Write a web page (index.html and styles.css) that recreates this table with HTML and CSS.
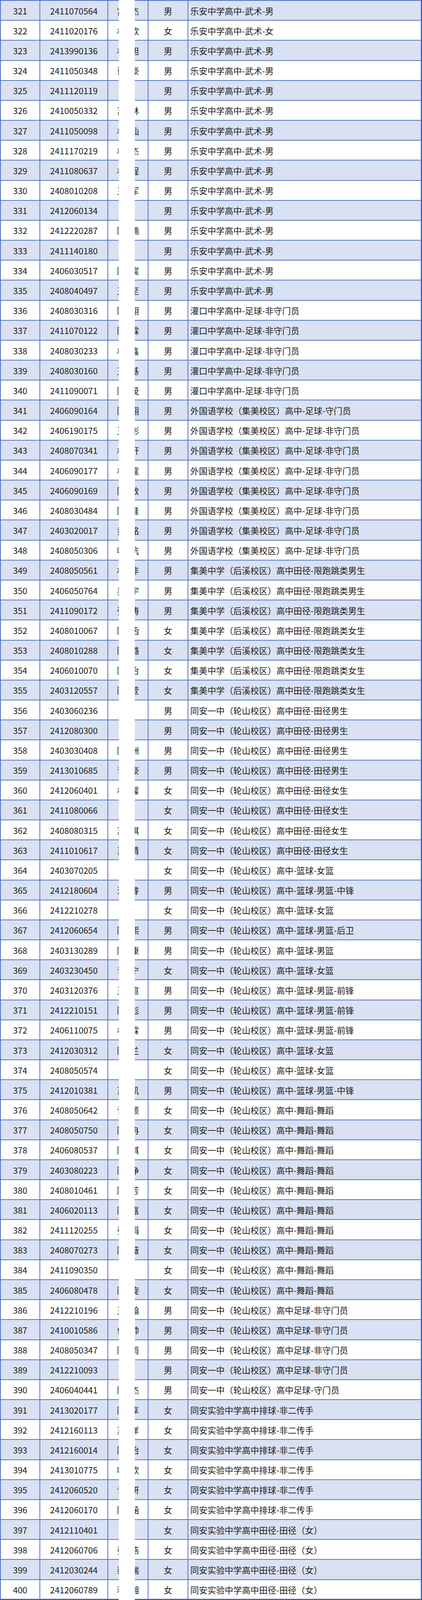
FILE: index.html
```html
<!DOCTYPE html>
<html lang="zh-CN">
<head>
<meta charset="utf-8">
<title>名单</title>
<link rel="stylesheet" href="styles.css">
</head>
<body>
<div class="sheet">
<div class="tbl">
<div class="row a"><span>321</span><span>2411070564</span><span>當X杰</span><span>男</span><span class="t">乐安中学高中-武术-男</span></div>
<div class="row"><span>322</span><span>2411020176</span><span>林X欣</span><span>女</span><span class="t">乐安中学高中-武术-女</span></div>
<div class="row a"><span>323</span><span>2413990136</span><span>林X旭</span><span>男</span><span class="t">乐安中学高中-武术-男</span></div>
<div class="row"><span>324</span><span>2411050348</span><span>谢X豪</span><span>男</span><span class="t">乐安中学高中-武术-男</span></div>
<div class="row a"><span>325</span><span>2411120119</span><span>X丨</span><span>男</span><span class="t">乐安中学高中-武术-男</span></div>
<div class="row"><span>326</span><span>2410050332</span><span>苏X林</span><span>男</span><span class="t">乐安中学高中-武术-男</span></div>
<div class="row a"><span>327</span><span>2411050098</span><span>林X仙</span><span>男</span><span class="t">乐安中学高中-武术-男</span></div>
<div class="row"><span>328</span><span>2411170219</span><span>林X杰</span><span>男</span><span class="t">乐安中学高中-武术-男</span></div>
<div class="row a"><span>329</span><span>2411080637</span><span>林X程</span><span>男</span><span class="t">乐安中学高中-武术-男</span></div>
<div class="row"><span>330</span><span>2408010208</span><span>王X军</span><span>男</span><span class="t">乐安中学高中-武术-男</span></div>
<div class="row a"><span>331</span><span>2412060134</span><span>X宇</span><span>男</span><span class="t">乐安中学高中-武术-男</span></div>
<div class="row"><span>332</span><span>2412220287</span><span>陈X楠</span><span>男</span><span class="t">乐安中学高中-武术-男</span></div>
<div class="row a"><span>333</span><span>2411140180</span><span>X丁</span><span>男</span><span class="t">乐安中学高中-武术-男</span></div>
<div class="row"><span>334</span><span>2406030517</span><span>陈X宸</span><span>男</span><span class="t">乐安中学高中-武术-男</span></div>
<div class="row a"><span>335</span><span>2408040497</span><span>王X至</span><span>男</span><span class="t">乐安中学高中-武术-男</span></div>
<div class="row"><span>336</span><span>2408030316</span><span>陈X翔</span><span>男</span><span class="t">灌口中学高中-足球-非守门员</span></div>
<div class="row a"><span>337</span><span>2411070122</span><span>陈X霖</span><span>男</span><span class="t">灌口中学高中-足球-非守门员</span></div>
<div class="row"><span>338</span><span>2408030233</span><span>林X鑫</span><span>男</span><span class="t">灌口中学高中-足球-非守门员</span></div>
<div class="row a"><span>339</span><span>2408030160</span><span>王X基</span><span>男</span><span class="t">灌口中学高中-足球-非守门员</span></div>
<div class="row"><span>340</span><span>2411090071</span><span>陈X茂</span><span>男</span><span class="t">灌口中学高中-足球-非守门员</span></div>
<div class="row a"><span>341</span><span>2406090164</span><span>陈X翔</span><span>男</span><span class="t">外国语学校（集美校区）高中-足球-守门员</span></div>
<div class="row"><span>342</span><span>2406190175</span><span>王X彬</span><span>男</span><span class="t">外国语学校（集美校区）高中-足球-非守门员</span></div>
<div class="row a"><span>343</span><span>2408070341</span><span>林X軒</span><span>男</span><span class="t">外国语学校（集美校区）高中-足球-非守门员</span></div>
<div class="row"><span>344</span><span>2406090177</span><span>林X霆</span><span>男</span><span class="t">外国语学校（集美校区）高中-足球-非守门员</span></div>
<div class="row a"><span>345</span><span>2406090169</span><span>陈X敦</span><span>男</span><span class="t">外国语学校（集美校区）高中-足球-非守门员</span></div>
<div class="row"><span>346</span><span>2408030484</span><span>陈X淮</span><span>男</span><span class="t">外国语学校（集美校区）高中-足球-非守门员</span></div>
<div class="row a"><span>347</span><span>2403020017</span><span>黄X铭</span><span>男</span><span class="t">外国语学校（集美校区）高中-足球-非守门员</span></div>
<div class="row"><span>348</span><span>2408050306</span><span>叶X杭</span><span>男</span><span class="t">外国语学校（集美校区）高中-足球-非守门员</span></div>
<div class="row a"><span>349</span><span>2408050561</span><span>林X非</span><span>男</span><span class="t">集美中学（后溪校区）高中田径-限跑跳类男生</span></div>
<div class="row"><span>350</span><span>2406050764</span><span>吴X宇</span><span>男</span><span class="t">集美中学（后溪校区）高中田径-限跑跳类男生</span></div>
<div class="row a"><span>351</span><span>2411090172</span><span>张X涛</span><span>男</span><span class="t">集美中学（后溪校区）高中田径-限跑跳类男生</span></div>
<div class="row"><span>352</span><span>2408010067</span><span>陈X函</span><span>女</span><span class="t">集美中学（后溪校区）高中田径-限跑跳类女生</span></div>
<div class="row a"><span>353</span><span>2408010288</span><span>陈X璐</span><span>女</span><span class="t">集美中学（后溪校区）高中田径-限跑跳类女生</span></div>
<div class="row"><span>354</span><span>2406010070</span><span>陈X怡</span><span>女</span><span class="t">集美中学（后溪校区）高中田径-限跑跳类女生</span></div>
<div class="row a"><span>355</span><span>2403120557</span><span>陈X萱</span><span>女</span><span class="t">集美中学（后溪校区）高中田径-限跑跳类女生</span></div>
<div class="row"><span>356</span><span>2403060236</span><span>X岚</span><span>男</span><span class="t">同安一中（轮山校区）高中田径-田径男生</span></div>
<div class="row a"><span>357</span><span>2412080300</span><span>X东</span><span>男</span><span class="t">同安一中（轮山校区）高中田径-田径男生</span></div>
<div class="row"><span>358</span><span>2403030408</span><span>陈X洲</span><span>男</span><span class="t">同安一中（轮山校区）高中田径-田径男生</span></div>
<div class="row a"><span>359</span><span>2413010685</span><span>许X豪</span><span>男</span><span class="t">同安一中（轮山校区）高中田径-田径男生</span></div>
<div class="row"><span>360</span><span>2412060401</span><span>林X馨</span><span>女</span><span class="t">同安一中（轮山校区）高中田径-田径女生</span></div>
<div class="row a"><span>361</span><span>2411080066</span><span>X文</span><span>女</span><span class="t">同安一中（轮山校区）高中田径-田径女生</span></div>
<div class="row"><span>362</span><span>2408080315</span><span>苏X琪</span><span>女</span><span class="t">同安一中（轮山校区）高中田径-田径女生</span></div>
<div class="row a"><span>363</span><span>2411010617</span><span>苏X婧</span><span>女</span><span class="t">同安一中（轮山校区）高中田径-田径女生</span></div>
<div class="row"><span>364</span><span>2403070205</span><span>X逸</span><span>女</span><span class="t">同安一中（轮山校区）高中-篮球-女篮</span></div>
<div class="row a"><span>365</span><span>2412180604</span><span>洪X睿</span><span>男</span><span class="t">同安一中（轮山校区）高中-篮球-男篮-中锋</span></div>
<div class="row"><span>366</span><span>2412210278</span><span>X宏</span><span>女</span><span class="t">同安一中（轮山校区）高中-篮球-女篮</span></div>
<div class="row a"><span>367</span><span>2412060654</span><span>陈X熙</span><span>男</span><span class="t">同安一中（轮山校区）高中-篮球-男篮-后卫</span></div>
<div class="row"><span>368</span><span>2403130289</span><span>陈X康</span><span>男</span><span class="t">同安一中（轮山校区）高中-篮球-男篮</span></div>
<div class="row a"><span>369</span><span>2403230450</span><span>许X宁</span><span>女</span><span class="t">同安一中（轮山校区）高中-篮球-女篮</span></div>
<div class="row"><span>370</span><span>2403120376</span><span>王X瑄</span><span>男</span><span class="t">同安一中（轮山校区）高中-篮球-男篮-前锋</span></div>
<div class="row a"><span>371</span><span>2412210151</span><span>陈X彪</span><span>男</span><span class="t">同安一中（轮山校区）高中-篮球-男篮-前锋</span></div>
<div class="row"><span>372</span><span>2406110075</span><span>林X霖</span><span>男</span><span class="t">同安一中（轮山校区）高中-篮球-男篮-前锋</span></div>
<div class="row a"><span>373</span><span>2412030312</span><span>陈X兰</span><span>女</span><span class="t">同安一中（轮山校区）高中-篮球-女篮</span></div>
<div class="row"><span>374</span><span>2408050574</span><span>X儿</span><span>女</span><span class="t">同安一中（轮山校区）高中-篮球-女篮</span></div>
<div class="row a"><span>375</span><span>2412010381</span><span>苏X凯</span><span>男</span><span class="t">同安一中（轮山校区）高中-篮球-男篮-中锋</span></div>
<div class="row"><span>376</span><span>2408050642</span><span>许X颖</span><span>女</span><span class="t">同安一中（轮山校区）高中-舞蹈-舞蹈</span></div>
<div class="row a"><span>377</span><span>2408050750</span><span>陈X冉</span><span>女</span><span class="t">同安一中（轮山校区）高中-舞蹈-舞蹈</span></div>
<div class="row"><span>378</span><span>2406080537</span><span>陈X淇</span><span>女</span><span class="t">同安一中（轮山校区）高中-舞蹈-舞蹈</span></div>
<div class="row a"><span>379</span><span>2403080223</span><span>陈X净</span><span>女</span><span class="t">同安一中（轮山校区）高中-舞蹈-舞蹈</span></div>
<div class="row"><span>380</span><span>2408010461</span><span>陈X芳</span><span>女</span><span class="t">同安一中（轮山校区）高中-舞蹈-舞蹈</span></div>
<div class="row a"><span>381</span><span>2406020113</span><span>陈X嘉</span><span>女</span><span class="t">同安一中（轮山校区）高中-舞蹈-舞蹈</span></div>
<div class="row"><span>382</span><span>2411120255</span><span>张X娟</span><span>女</span><span class="t">同安一中（轮山校区）高中-舞蹈-舞蹈</span></div>
<div class="row a"><span>383</span><span>2408070273</span><span>陈X薇</span><span>女</span><span class="t">同安一中（轮山校区）高中-舞蹈-舞蹈</span></div>
<div class="row"><span>384</span><span>2411090350</span><span>X心</span><span>女</span><span class="t">同安一中（轮山校区）高中-舞蹈-舞蹈</span></div>
<div class="row a"><span>385</span><span>2406080478</span><span>陈X旋</span><span>女</span><span class="t">同安一中（轮山校区）高中-舞蹈-舞蹈</span></div>
<div class="row"><span>386</span><span>2412210196</span><span>王X翰</span><span>男</span><span class="t">同安一中（轮山校区）高中足球-非守门员</span></div>
<div class="row a"><span>387</span><span>2410010586</span><span>何X帅</span><span>男</span><span class="t">同安一中（轮山校区）高中足球-非守门员</span></div>
<div class="row"><span>388</span><span>2408050347</span><span>陈X雨</span><span>男</span><span class="t">同安一中（轮山校区）高中足球-非守门员</span></div>
<div class="row a"><span>389</span><span>2412210093</span><span>X钉</span><span>男</span><span class="t">同安一中（轮山校区）高中足球-非守门员</span></div>
<div class="row"><span>390</span><span>2406040441</span><span>陈X杰</span><span>男</span><span class="t">同安一中（轮山校区）高中足球-守门员</span></div>
<div class="row a"><span>391</span><span>2413020177</span><span>陈X享</span><span>女</span><span class="t">同安实验中学高中排球-非二传手</span></div>
<div class="row"><span>392</span><span>2412160113</span><span>苏X洋</span><span>女</span><span class="t">同安实验中学高中排球-非二传手</span></div>
<div class="row a"><span>393</span><span>2412160014</span><span>陈X怡</span><span>女</span><span class="t">同安实验中学高中排球-非二传手</span></div>
<div class="row"><span>394</span><span>2413010775</span><span>叶X欣</span><span>女</span><span class="t">同安实验中学高中排球-非二传手</span></div>
<div class="row a"><span>395</span><span>2412060520</span><span>许X妍</span><span>女</span><span class="t">同安实验中学高中排球-非二传手</span></div>
<div class="row"><span>396</span><span>2412060170</span><span>陈X涵</span><span>女</span><span class="t">同安实验中学高中排球-非二传手</span></div>
<div class="row a"><span>397</span><span>2412110401</span><span>X园</span><span>女</span><span class="t">同安实验中学高中田径-田径（女）</span></div>
<div class="row"><span>398</span><span>2412060706</span><span>张X燕</span><span>女</span><span class="t">同安实验中学高中田径-田径（女）</span></div>
<div class="row a"><span>399</span><span>2412030244</span><span>蔡X瑞</span><span>女</span><span class="t">同安实验中学高中田径-田径（女）</span></div>
<div class="row"><span>400</span><span>2412060789</span><span>蒋X湘</span><span>女</span><span class="t">同安实验中学高中田径-田径（女）</span></div>
</div>
<div class="mask"></div>
</div>
</body>
</html>
```
FILE: styles.css
```css
html, body {
  margin: 0;
  padding: 0;
  background: #ffffff;
}
.sheet {
  position: relative;
  width: 1080px;
}
.tbl {
  box-sizing: border-box;
  width: 1080px;
  border-top: 2px solid #4a6fc0;
  border-left: 2px solid #4a6fc0;
  font-family: "Noto Sans CJK SC", "Noto Sans", sans-serif;
  font-size: 22px;
  color: #1c1c1c;
}
.row {
  display: grid;
  grid-template-columns: 101px 174px 103px 102px 1fr;
  height: calc((100vh - 2px) / 80);
  box-sizing: border-box;
  border-bottom: 2px solid #5578c4;
}
.row:last-child {
  border-bottom: 3px solid #4164b4;
}
.row span {
  box-sizing: border-box;
  border-right: 2px solid #5578c4;
  display: flex;
  align-items: center;
  justify-content: center;
  white-space: nowrap;
  overflow: hidden;
  line-height: 1;
}
.row span.t {
  justify-content: flex-start;
  padding-left: 5px;
  border-right: 3px solid #4164b4;
}
.a {
  background: #d9e1f2;
}
.mask {
  position: absolute;
  left: 304px;
  width: 41px;
  top: 0;
  bottom: 0;
  background: #ffffff;
}
```
